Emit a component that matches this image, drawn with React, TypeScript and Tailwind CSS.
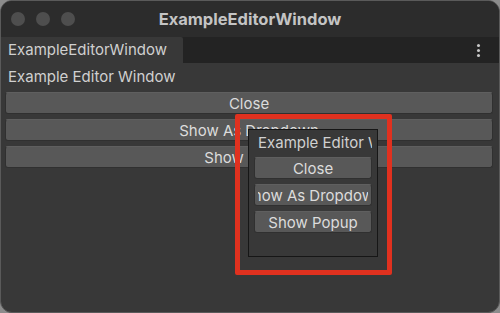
import React from 'react';

const font = { fontFamily: 'Inter, "Noto Sans", sans-serif' };

const EditorButton: React.FC<{ label: string; className?: string }> = ({ label, className }) => (
    <div
        className={`h-[22px] flex px-[3px] rounded-[3px] bg-[#585858] border border-[#303030] border-t-[#5f5f5f] text-[#dcdcdc] text-[15px] leading-none ${className || ''}`}
    >
        <div className="flex-1 flex items-center justify-center overflow-hidden whitespace-nowrap">{label}</div>
    </div>
);

const App: React.FC = () => {
    return (
        <div className="w-[500px] h-[313px] bg-[#8c8c8c] relative overflow-hidden" style={font}>
            <div className="w-[500px] h-[313px] rounded-[12px] border border-[#5a5a5a] bg-[#383838] flex flex-col overflow-hidden">
                {/* title bar */}
                <div className="h-[36px] bg-[#2c2c2c] flex items-center relative">
                    <div className="flex gap-[11px] pl-[10px]">
                        <div className="w-[14px] h-[14px] rounded-full bg-[#4e4e4e]" />
                        <div className="w-[14px] h-[14px] rounded-full bg-[#4e4e4e]" />
                        <div className="w-[14px] h-[14px] rounded-full bg-[#4e4e4e]" />
                    </div>
                    <div className="absolute inset-0 flex items-center justify-center text-[16.5px] font-bold text-[#c4c4c4]">
                        ExampleEditorWindow
                    </div>
                </div>

                {/* tab strip */}
                <div className="h-[26px] bg-[#232323] flex items-stretch">
                    <div className="w-[182px] bg-[#383838] flex items-center pl-[7px] text-[15px] text-[#d0d0d0] rounded-tr-[2px]">
                        ExampleEditorWindow
                    </div>
                    <div className="flex-1" />
                    <div className="w-[20px] flex flex-col items-center justify-center gap-[2px] mr-[11px]">
                        <div className="w-[3px] h-[3px] rounded-full bg-[#c8c8c8]" />
                        <div className="w-[3px] h-[3px] rounded-full bg-[#c8c8c8]" />
                        <div className="w-[3px] h-[3px] rounded-full bg-[#c8c8c8]" />
                    </div>
                </div>

                {/* content */}
                <div className="flex flex-col px-[4px]">
                    <div className="h-[29px] flex items-center pl-[3px] text-[15px] text-[#d0d0d0]">
                        Example Editor Window
                    </div>
                    <div className="flex flex-col gap-[5px] pr-[2px]">
                        <EditorButton label="Close" />
                        <EditorButton label="Show As Dropdown" />
                        <EditorButton label="Show Popup" />
                    </div>
                </div>
            </div>

            {/* popup window */}
            <div className="absolute left-[248px] top-[129px] w-[130px] h-[128px] bg-[#383838] border border-[#161616] flex flex-col px-[5px]">
                <div className="h-[27px] flex items-center pl-[4px] overflow-hidden whitespace-nowrap text-[15px] text-[#d0d0d0]">
                    Example Editor Window
                </div>
                <div className="flex flex-col gap-[5px]">
                    <EditorButton label="Close" />
                    <EditorButton label="Show As Dropdown" />
                    <EditorButton label="Show Popup" />
                </div>
            </div>

            {/* highlight */}
            <div className="absolute left-[235px] top-[114px] w-[157px] h-[161px] border-[5px] border-[#e0311f] rounded-[2px]" />
        </div>
    );
};

export default App;
